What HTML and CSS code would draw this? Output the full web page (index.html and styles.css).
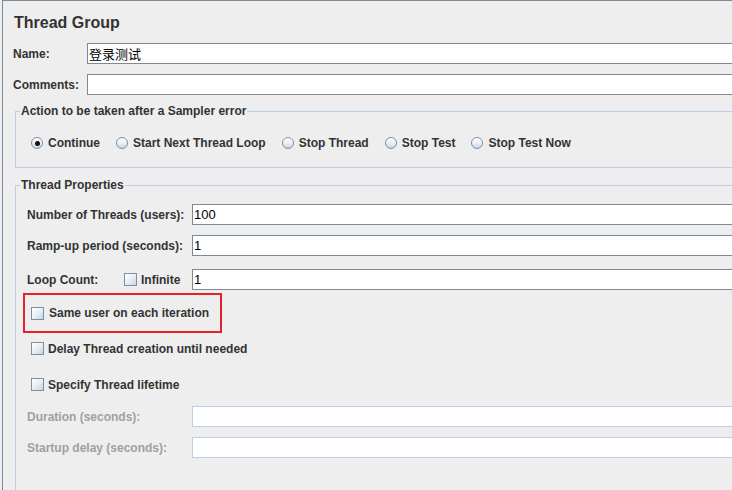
FILE: index.html
```html
<!DOCTYPE html>
<html lang="en">
<head>
    <meta charset="UTF-8">
    <meta name="viewport" content="width=device-width, initial-scale=1.0">
    <link rel="stylesheet" href="styles.css">
</head>
<body>
    <div class="panel">
        <h1 class="title">Thread Group</h1>

        <div class="field-row name-row">
            <label class="top-label">Name:</label>
            <input type="text" class="text-box" value="登录测试">
        </div>
        <div class="field-row comments-row">
            <label class="top-label">Comments:</label>
            <input type="text" class="text-box" value="">
        </div>

        <fieldset class="group error-group">
            <legend>Action to be taken after a Sampler error</legend>
            <div class="radio-list">
                <span class="radio-item"><i class="radio checked"></i>Continue</span>
                <span class="radio-item"><i class="radio"></i>Start Next Thread Loop</span>
                <span class="radio-item"><i class="radio"></i>Stop Thread</span>
                <span class="radio-item"><i class="radio"></i>Stop Test</span>
                <span class="radio-item"><i class="radio"></i>Stop Test Now</span>
            </div>
        </fieldset>

        <fieldset class="group props-group">
            <legend>Thread Properties</legend>
            <div class="props-body">
                <div class="prop-row threads-row">
                    <label class="prop-label">Number of Threads (users):</label>
                    <input type="text" class="text-box" value="100">
                </div>
                <div class="prop-row ramp-row">
                    <label class="prop-label">Ramp-up period (seconds):</label>
                    <input type="text" class="text-box" value="1">
                </div>
                <div class="prop-row loop-row">
                    <label class="prop-label loop-label">
                        <span class="loop-text">Loop Count:</span>
                        <span class="check-item infinite"><i class="check"></i>Infinite</span>
                    </label>
                    <input type="text" class="text-box" value="1">
                </div>

                <div class="highlight">
                    <span class="check-item"><i class="check"></i>Same user on each iteration</span>
                </div>

                <div class="check-row delay-row">
                    <span class="check-item"><i class="check"></i>Delay Thread creation until needed</span>
                </div>
                <div class="check-row lifetime-row">
                    <span class="check-item"><i class="check"></i>Specify Thread lifetime</span>
                </div>

                <div class="prop-row disabled duration-row">
                    <label class="prop-label">Duration (seconds):</label>
                    <input type="text" class="text-box" value="" disabled>
                </div>
                <div class="prop-row disabled startup-row">
                    <label class="prop-label">Startup delay (seconds):</label>
                    <input type="text" class="text-box" value="" disabled>
                </div>
            </div>
        </fieldset>
    </div>
</body>
</html>
```

FILE: styles.css
```css
* {
    box-sizing: border-box;
}

body {
    margin: 0 0 0 2px;
    background: #eeeeee;
    font-family: "Liberation Sans", Arial, "Noto Sans CJK SC", sans-serif;
    font-size: 12px;
    font-weight: bold;
    color: #333333;
    overflow: hidden;
}

.panel {
    width: 780px;
    height: 500px;
    border-left: 1px solid #7a8a99;
    border-top: 1px solid #7a8a99;
    padding: 13px 0 0 10px;
}

.title {
    margin: 0;
    font-size: 16px;
    line-height: 18px;
    font-weight: bold;
    padding-left: 1px;
}

.field-row {
    display: flex;
    align-items: center;
    height: 21px;
}

.name-row {
    margin-top: 11px;
}

.comments-row {
    margin-top: 10px;
}

.top-label {
    width: 74px;
    flex-shrink: 0;
}

.text-box {
    flex: 1;
    height: 21px;
    margin: 0;
    padding: 0 1px;
    border: 1px solid #7a8a99;
    border-radius: 0;
    background: #ffffff;
    font-family: "Liberation Sans", Arial, "Noto Sans CJK SC", sans-serif;
    font-size: 13px;
    font-weight: normal;
    color: #000000;
    outline: none;
}

/* titled borders */
.group {
    margin: 0 0 0 2px;
    padding: 0;
    border: 1px solid #b8cfe5;
    min-width: 0;
}

.group legend {
    margin-left: 4px;
    padding: 0 1px;
    line-height: 14px;
}

.error-group {
    margin-top: 9px;
    padding: 18px 0 17px 0;
}

.props-group {
    margin-top: 10px;
    padding: 12px 0 60px 0;
}

.radio-list {
    display: flex;
    align-items: center;
    gap: 16px;
    height: 14px;
    padding-left: 15px;
}

.radio-item,
.check-item {
    display: inline-flex;
    align-items: center;
    white-space: nowrap;
}

.radio {
    width: 12px;
    height: 12px;
    margin-right: 5px;
    border: 1px solid #7d8fa3;
    border-radius: 50%;
    background: linear-gradient(180deg, #ffffff 0%, #eef2f6 45%, #c9d5e2 100%);
    position: relative;
}

.radio.checked::after {
    content: "";
    position: absolute;
    left: 2.5px;
    top: 2.5px;
    width: 5px;
    height: 5px;
    border-radius: 50%;
    background: #111111;
}

.check {
    width: 13px;
    height: 13px;
    margin-right: 5px;
    border: 1px solid #7d8fa3;
    background: linear-gradient(135deg, #ffffff 0%, #e9eff5 50%, #c6d3e1 100%);
}

.props-body {
    padding-left: 11px;
}

.prop-row {
    display: flex;
    align-items: center;
    height: 21px;
}

.prop-label {
    width: 165px;
    flex-shrink: 0;
}

.ramp-row {
    margin-top: 10px;
}

.loop-row {
    margin-top: 13px;
}

.loop-label {
    display: flex;
    align-items: center;
}

.loop-text {
    width: 97px;
}

.infinite .check {
    margin-right: 4px;
}

.highlight {
    display: flex;
    align-items: center;
    width: 199px;
    height: 40px;
    margin: 3px 0 0 -4px;
    padding-left: 6px;
    border: 2px solid #e8202a;
}

.check-row {
    display: flex;
    align-items: center;
    height: 21px;
    padding-left: 4px;
}

.check-row .check {
    margin-right: 4px;
}

.delay-row {
    margin-top: 5px;
}

.lifetime-row {
    margin-top: 15px;
}

.duration-row {
    margin-top: 11px;
}

.startup-row {
    margin-top: 10px;
}

.disabled .prop-label {
    color: #a0a0a0;
}

.disabled .text-box {
    border-color: #b8cfe5;
    background: #ffffff;
}
```
